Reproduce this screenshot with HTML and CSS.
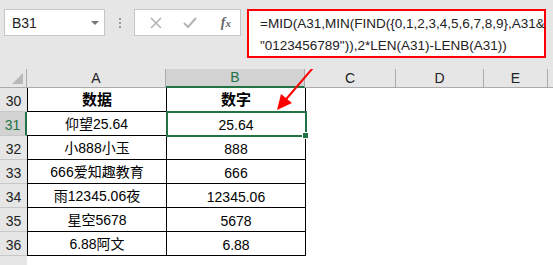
FILE: index.html
```html
<!DOCTYPE html>
<html lang="zh-CN">
<head>
    <meta charset="UTF-8">
    <title>Excel - MID 提取数字</title>
    <link rel="stylesheet" href="styles.css">
</head>
<body>
    <div class="formula-bar">
        <div class="name-box">
            <span>B31</span>
            <span class="caret"></span>
        </div>
        <div class="grip"></div>
        <div class="fx-buttons">
            <svg class="btn-icon" width="12" height="12" viewBox="0 0 12 12">
                <path d="M1 1 L11 11 M11 1 L1 11" stroke="#b4b4b4" stroke-width="1.6" fill="none"/>
            </svg>
            <svg class="btn-icon" width="14" height="12" viewBox="0 0 14 12">
                <path d="M1 6 L5 10 L13 1" stroke="#b4b4b4" stroke-width="2" fill="none"/>
            </svg>
            <span class="fx">f<i>x</i></span>
        </div>
        <div class="formula">
            =MID(A31,MIN(FIND({0,1,2,3,4,5,6,7,8,9},A31&amp;<br>"0123456789")),2*LEN(A31)-LENB(A31))
        </div>
    </div>

    <div class="sheet">
        <div class="row head-row">
            <div class="corner"><span class="corner-tri"></span></div>
            <div class="col-head">A</div>
            <div class="col-head active">B</div>
            <div class="col-head">C</div>
            <div class="col-head">D</div>
            <div class="col-head">E</div>
            <div class="col-head last"></div>
        </div>
        <div class="row">
            <div class="row-head">30</div>
            <div class="cell a bold">数据</div>
            <div class="cell b bold">数字</div>
            <div class="blank"></div>
        </div>
        <div class="row">
            <div class="row-head active">31</div>
            <div class="cell a">仰望25.64</div>
            <div class="cell b selected">25.64<span class="handle"></span></div>
            <div class="blank"></div>
        </div>
        <div class="row">
            <div class="row-head">32</div>
            <div class="cell a">小888小玉</div>
            <div class="cell b">888</div>
            <div class="blank"></div>
        </div>
        <div class="row">
            <div class="row-head">33</div>
            <div class="cell a">666爱知趣教育</div>
            <div class="cell b">666</div>
            <div class="blank"></div>
        </div>
        <div class="row">
            <div class="row-head">34</div>
            <div class="cell a">雨12345.06夜</div>
            <div class="cell b">12345.06</div>
            <div class="blank"></div>
        </div>
        <div class="row">
            <div class="row-head">35</div>
            <div class="cell a">星空5678</div>
            <div class="cell b">5678</div>
            <div class="blank"></div>
        </div>
        <div class="row">
            <div class="row-head">36</div>
            <div class="cell a">6.88阿文</div>
            <div class="cell b">6.88</div>
            <div class="blank"></div>
        </div>
        <div class="row">
            <div class="row-head"></div>
            <div class="blank"></div>
        </div>

        <svg class="arrow" width="60" height="60" viewBox="0 0 60 60">
            <line x1="50" y1="2" x2="14" y2="44" stroke="#ff0000" stroke-width="2"/>
            <polygon points="9,50 13,34 24,43" fill="#ff0000"/>
        </svg>
    </div>
</body>
</html>
```

FILE: styles.css
```css
body {
    margin: 0;
    width: 553px;
    height: 265px;
    overflow: hidden;
    background-color: #e6e6e6;
    font-family: 'Liberation Sans', 'Noto Sans CJK SC', sans-serif;
    color: #000;
}

.formula-bar {
    display: flex;
    align-items: flex-start;
    height: 69px;
    padding: 9px 0 0 4px;
    box-sizing: border-box;
}

.name-box {
    width: 101px;
    height: 27px;
    box-sizing: border-box;
    background-color: #fff;
    border: 1px solid #c6c6c6;
    display: flex;
    align-items: center;
    justify-content: space-between;
    padding: 0 5px 0 7px;
    font-size: 14px;
    color: #222;
}

.caret {
    width: 0;
    height: 0;
    border-left: 4px solid transparent;
    border-right: 4px solid transparent;
    border-top: 4px solid #777;
}

.grip {
    width: 2px;
    height: 10px;
    margin: 9px 13px 0 14px;
    background: repeating-linear-gradient(#9a9a9a 0 2px, transparent 2px 4px);
}

.fx-buttons {
    width: 107px;
    height: 27px;
    box-sizing: border-box;
    background-color: #fff;
    border: 1px solid #c6c6c6;
    display: flex;
    align-items: center;
    padding: 0 9px 0 15px;
    gap: 21px;
}

.fx {
    margin-left: auto;
    font-family: 'Liberation Serif', serif;
    font-style: italic;
    font-weight: bold;
    font-size: 14px;
    color: #666;
}

.fx i {
    font-size: 11px;
}

.formula {
    width: 299px;
    height: 49px;
    margin-left: 6px;
    box-sizing: border-box;
    background-color: #fff;
    border: 2px solid #ff0000;
    padding: 2px 0 0 11px;
    font-size: 13.5px;
    line-height: 22px;
    color: #222;
    white-space: nowrap;
}

.sheet {
    position: relative;
    background-color: #fff;
    height: 196px;
    overflow: hidden;
}

.row {
    display: grid;
    grid-template-columns: 27px 140px 139px 1fr;
    height: 24px;
}

.head-row {
    grid-template-columns: 27px 139px 139px 91px 88px 64px 1fr;
    height: 19px;
    background-color: #e6e6e6;
}

.corner {
    position: relative;
    border-right: 1px solid #ababab;
    border-bottom: 1px solid #ababab;
}

.corner-tri {
    position: absolute;
    right: 3px;
    bottom: 3px;
    width: 0;
    height: 0;
    border-left: 11px solid transparent;
    border-bottom: 11px solid #b9b9b9;
}

.col-head {
    border-right: 1px solid #ababab;
    border-bottom: 1px solid #ababab;
    font-size: 14px;
    line-height: 18px;
    text-align: center;
    color: #222;
}

.col-head.active {
    background-color: #d2d2d2;
    color: #217346;
    border-bottom: 2px solid #217346;
    line-height: 17px;
}

.col-head.last {
    border-right: none;
}

.row-head {
    background-color: #e6e6e6;
    border-bottom: 1px solid #c8c8c8;
    font-size: 14px;
    display: flex;
    align-items: flex-end;
    justify-content: center;
    padding-bottom: 2px;
    box-sizing: border-box;
    color: #222;
}

.row-head.active {
    background-color: #d2d2d2;
    color: #217346;
    border-right: 2px solid #217346;
}

.cell {
    position: relative;
    border-right: 1px solid #000;
    border-bottom: 1px solid #000;
    font-size: 14px;
    display: flex;
    align-items: flex-end;
    justify-content: center;
    padding-bottom: 2px;
    box-sizing: border-box;
}

.cell.a {
    border-left: 1px solid #000;
}

.row-head.active + .cell.a {
    border-left: none;
}

.bold {
    font-weight: bold;
    font-size: 15px;
}

.selected {
    outline: 2px solid #217346;
    outline-offset: -1px;
    z-index: 1;
}

.handle {
    position: absolute;
    right: -4px;
    bottom: -4px;
    width: 5px;
    height: 5px;
    background-color: #217346;
    border: 1px solid #fff;
}

.arrow {
    position: absolute;
    left: 268px;
    top: -9px;
    z-index: 2;
}
```
